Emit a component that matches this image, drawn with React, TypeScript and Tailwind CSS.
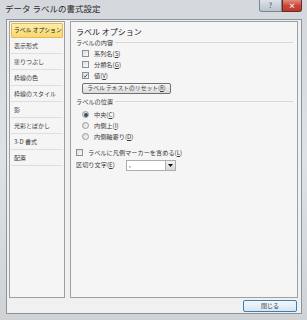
import React from "react";

const font = { fontFamily: '"Noto Sans CJK JP", "Noto Sans", sans-serif' };

function CheckBox({ checked = false }: { checked?: boolean }) {
  return (
    <span className="w-[7px] h-[7px] border border-[#8e8f8f] bg-gradient-to-br from-[#dcdcdc] to-[#fafafa] flex items-center justify-center shrink-0">
      {checked && (
        <svg width="6" height="6" viewBox="0 0 6 6">
          <path d="M0.8 3 L2.4 4.6 L5.2 1" stroke="#2a4d8c" strokeWidth="1.2" fill="none" />
        </svg>
      )}
    </span>
  );
}

function Radio({ checked = false }: { checked?: boolean }) {
  return (
    <span className="w-[7px] h-[7px] rounded-full border border-[#9a9a9a] bg-gradient-to-br from-[#d8d8d8] to-[#f8f8f8] flex items-center justify-center shrink-0">
      {checked && <span className="w-[4px] h-[4px] rounded-full bg-[#3a4f6a]" />}
    </span>
  );
}

const navItems = [
  "表示形式",
  "塗りつぶし",
  "枠線の色",
  "枠線のスタイル",
  "影",
  "光彩とぼかし",
  "3-D 書式",
  "配置",
];

export default function App() {
  return (
    <div
      className="w-[307px] h-[320px] flex flex-col bg-gradient-to-b from-[#d4d8dc] via-[#dfe2e4] to-[#cfd3d6] overflow-hidden"
      style={font}
    >
      {/* title bar */}
      <div className="h-[19px] flex items-start justify-between pl-[5px] pr-[5px]">
        <span className="text-[8.5px] leading-[9px] mt-[4px] text-[#2a2a2a]">データ ラベルの書式設定</span>
        <div className="flex">
          <div className="w-[23px] h-[12px] border border-[#7a8590] border-t-0 rounded-bl-[3px] bg-gradient-to-b from-[#dde3ea] to-[#b9c3cc] flex items-center justify-center text-[7px] leading-none text-[#3c4650]">
            ?
          </div>
          <div className="w-[20px] h-[12px] border border-[#6b2a22] border-t-0 rounded-br-[3px] bg-gradient-to-b from-[#e08a80] via-[#c9473a] to-[#c0392b] flex items-center justify-center text-[7px] leading-none text-white font-bold">
            ×
          </div>
        </div>
      </div>

      {/* client */}
      <div className="flex-1 mx-[6px] mb-[6px] mr-[5px] bg-[#f0f0f0] border border-[#8b949c] flex flex-col">
        <div className="flex gap-[5px] pl-[2px] pr-[3px] pt-[1px] h-[278px]">
          {/* nav */}
          <div className="w-[56px] h-full border border-[#a0a0a0] bg-[#f5f5f5] p-[1px] flex flex-col">
            <div className="h-[15px] border border-[#e5b956] bg-gradient-to-b from-[#fdeea6] to-[#f8d86a] rounded-[1px] flex items-center pl-[2px] text-[5.8px] text-[#222] whitespace-nowrap">
              ラベル オプション
            </div>
            {navItems.map((t) => (
              <div
                key={t}
                className="h-[16px] border-b border-[#dedede] flex items-center pl-[3px] text-[6px] text-[#3a3a3a] whitespace-nowrap"
              >
                {t}
              </div>
            ))}
          </div>

          {/* right panel */}
          <div className="flex-1 h-full border border-[#a0a0a0] bg-[#f5f5f5] pl-[5px] pr-[4px] pt-[5px] flex flex-col text-[6.2px] text-[#3a3a3a]">
            <div className="text-[8px] leading-[10px] text-[#1a1a1a]">ラベル オプション</div>
            <div className="flex items-center gap-[2px] mt-[1px] h-[9px]">
              <span className="whitespace-nowrap">ラベルの内容</span>
              <span className="flex-1 border-t border-[#d6d6d6]" />
            </div>
            <div className="pl-[6px] flex flex-col">
              <div className="flex items-center gap-[5px] h-[11px] mt-[1px]">
                <CheckBox />
                <span>系列名(<u>S</u>)</span>
              </div>
              <div className="flex items-center gap-[5px] h-[11px]">
                <CheckBox />
                <span>分類名(<u>G</u>)</span>
              </div>
              <div className="flex items-center gap-[5px] h-[11px]">
                <CheckBox checked />
                <span>値(<u>V</u>)</span>
              </div>
              <div className="mt-[2px] w-[89px] h-[11px] border border-[#707070] rounded-[2px] bg-gradient-to-b from-[#f6f6f6] to-[#dcdcdc] flex items-center justify-center whitespace-nowrap text-[5.8px]">
                ラベル テキストのリセット(<u>R</u>)
              </div>
            </div>
            <div className="flex items-center gap-[2px] mt-[3px] h-[9px]">
              <span className="whitespace-nowrap">ラベルの位置</span>
              <span className="flex-1 border-t border-[#d6d6d6]" />
            </div>
            <div className="pl-[6px] flex flex-col mt-[3px]">
              <div className="flex items-center gap-[5px] h-[11px]">
                <Radio checked />
                <span>中央(<u>C</u>)</span>
              </div>
              <div className="flex items-center gap-[5px] h-[11px]">
                <Radio />
                <span>内側上(<u>I</u>)</span>
              </div>
              <div className="flex items-center gap-[5px] h-[11px]">
                <Radio />
                <span>内側軸寄り(<u>D</u>)</span>
              </div>
            </div>
            <div className="flex items-center gap-[5px] h-[11px] mt-[5px]">
              <CheckBox />
              <span className="whitespace-nowrap">ラベルに凡例マーカーを含める(<u>L</u>)</span>
            </div>
            <div className="flex items-center h-[12px] mt-[1px]">
              <span className="w-[50px] whitespace-nowrap">区切り文字(<u>E</u>)</span>
              <div className="w-[50px] h-[11px] border border-[#abadb3] bg-white flex items-center justify-between">
                <span className="pl-[2px] leading-none">,</span>
                <span className="w-[10px] h-full border-l border-[#b0b0b0] bg-gradient-to-b from-[#f2f2f2] to-[#d8d8d8] flex items-center justify-center">
                  <svg width="5" height="3" viewBox="0 0 5 3">
                    <path d="M0 0 L5 0 L2.5 3 Z" fill="#111" />
                  </svg>
                </span>
              </div>
            </div>
          </div>
        </div>

        {/* footer */}
        <div className="flex-1 flex items-center justify-end pr-[4px]">
          <div className="w-[54px] h-[12px] border border-[#3c7fb1] rounded-[2px] bg-gradient-to-b from-[#f2f8fc] to-[#d8e6f0] flex items-center justify-center text-[6px] text-[#333]">
            閉じる
          </div>
        </div>
      </div>
    </div>
  );
}
